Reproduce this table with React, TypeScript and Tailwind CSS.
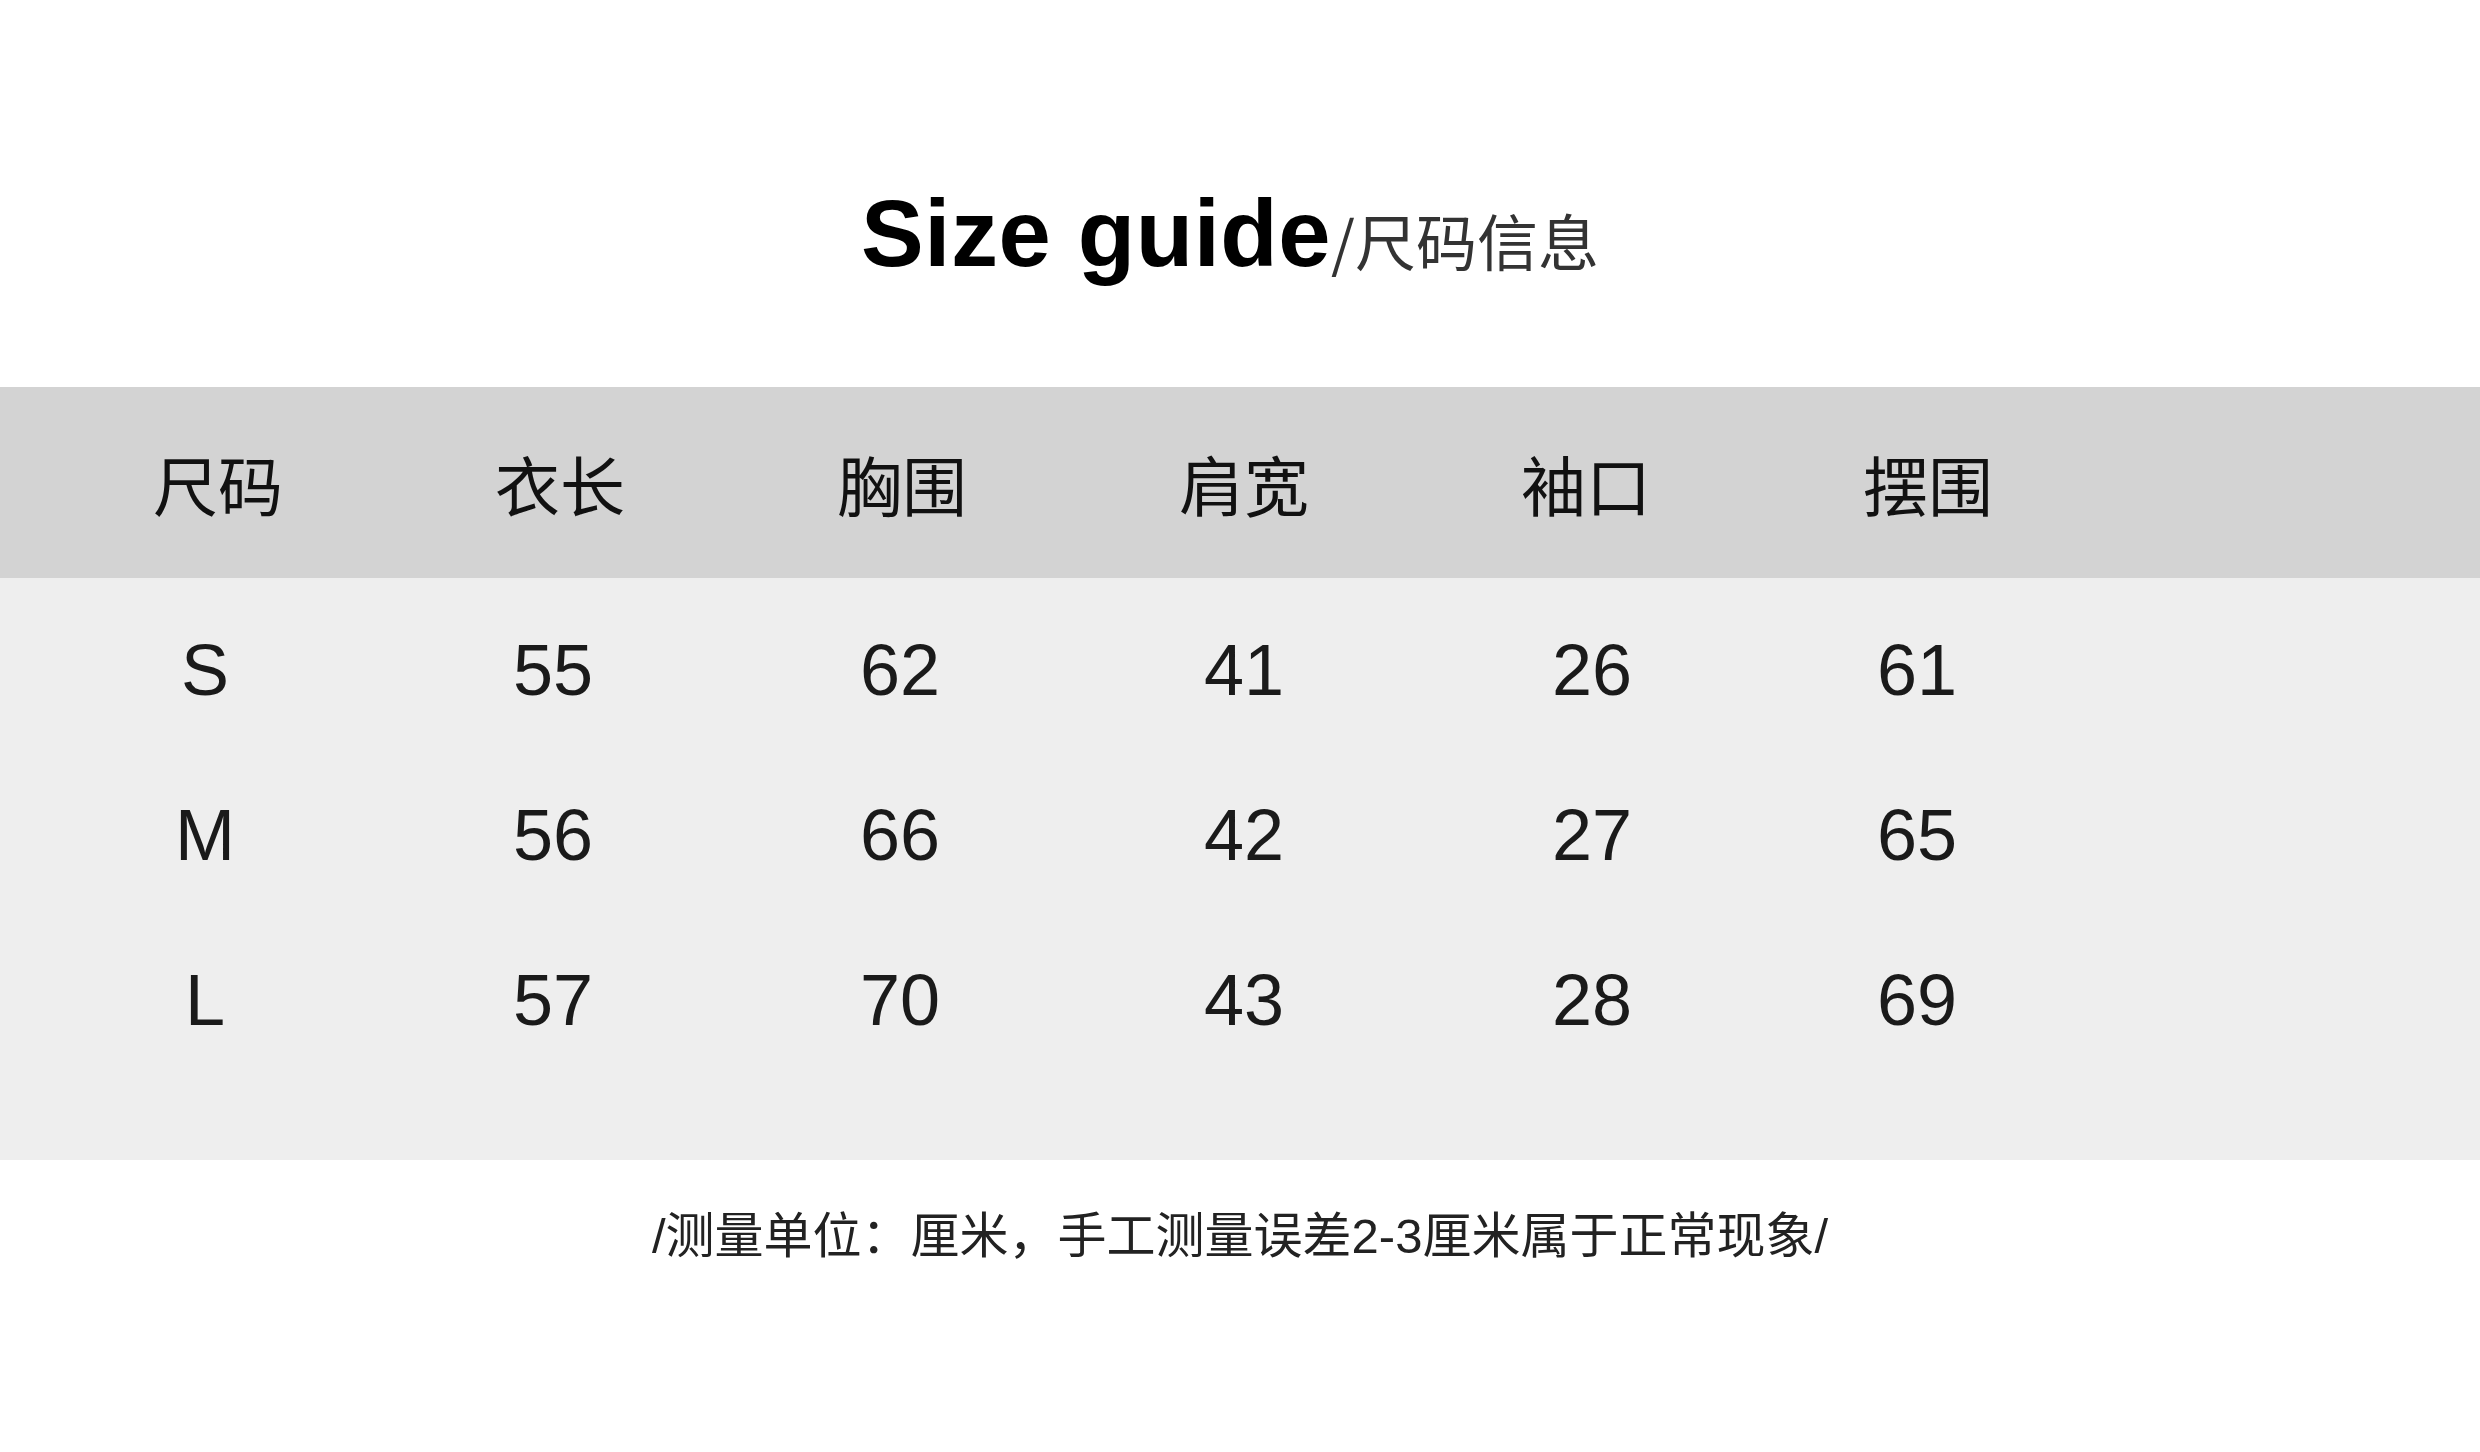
const sans = "font-['Liberation_Sans','Noto_Sans_CJK_SC',sans-serif]";
const cjk = "font-['Noto_Sans_CJK_SC','Liberation_Sans',sans-serif]";

const headers = ["尺码", "衣长", "胸围", "肩宽", "袖口", "摆围"];

const rows = [
  ["S", "55", "62", "41", "26", "61"],
  ["M", "56", "66", "42", "27", "65"],
  ["L", "57", "70", "43", "28", "69"],
];

// the source sheet isn't perfectly regular, nudge each body column a bit
const cellPad = ["pr-[26px]", "pr-[14px]", "pr-[4px]", "", "pl-[12px]", "pr-[22px]"];

export default function App() {
  return (
    <div className="h-[1452px] w-[2480px] overflow-hidden bg-white">
      {/* title */}
      <div className="flex items-baseline justify-center pt-[187px] pr-[20px]">
        <span className={`${sans} text-[94px] font-bold leading-none tracking-[0.5px] text-black`}>
          Size guide
        </span>
        <span className={`${cjk} text-[61px] leading-none text-[#333]`}>/尺码信息</span>
      </div>

      {/* table */}
      <div className="mt-[106px]">
        <div className="grid h-[191px] grid-cols-[repeat(6,342px)] items-center bg-[#d3d3d3] pl-[47px] pt-[1px]">
          {headers.map((h) => (
            <div key={h} className={`${cjk} text-center text-[65px] leading-none text-[#111]`}>
              {h}
            </div>
          ))}
        </div>

        <div className="bg-[#eeeeee] pb-[78px] pl-[47px] pt-[9px]">
          {rows.map((r) => (
            <div key={r[0]} className="grid h-[165px] grid-cols-[repeat(6,342px)] items-center">
              {r.map((v, i) => (
                <div key={i} className={`${sans} text-center text-[72px] leading-none text-[#1a1a1a] ${cellPad[i]}`}>
                  {v}
                </div>
              ))}
            </div>
          ))}
        </div>
      </div>

      {/* note */}
      <div className="mt-[52px] flex justify-center">
        <p className={`${sans} text-[49px] leading-none text-[#222]`}>
          /测量单位：厘米，手工测量误差2-3厘米属于正常现象/
        </p>
      </div>
    </div>
  );
}
